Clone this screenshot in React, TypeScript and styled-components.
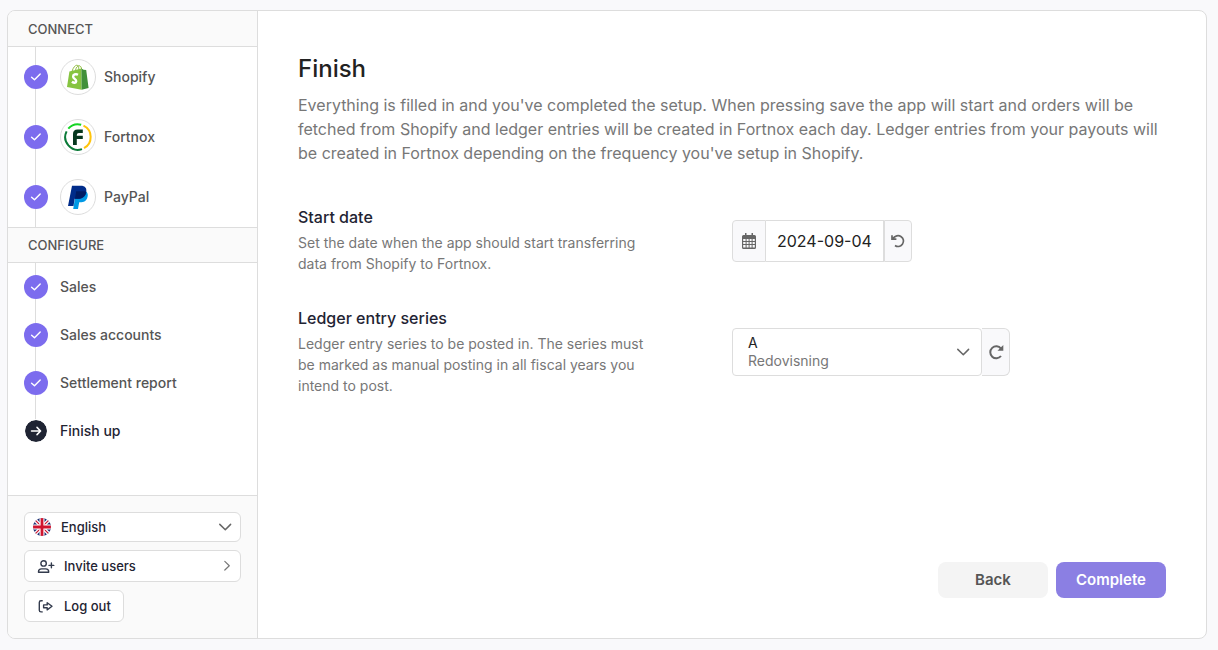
import React, { useState } from "react";
import styled, { createGlobalStyle, css } from "styled-components";

const GlobalStyle = createGlobalStyle`
  *, *::before, *::after { box-sizing: border-box; }
  html, body, #root { height: 100%; }
  body {
    margin: 0;
    background: #f9f9fb;
    font-family: Inter, "Liberation Sans", sans-serif;
    font-size: 14px;
    line-height: 20px;
    color: #1f2433;
  }
  button, input, select { font: inherit; color: inherit; margin: 0; }
`;

const line = "#dddddd";

const Page = styled.div`
  min-height: 100%;
  display: flex;
  padding: 10px 11px 11px 7px;
`;

const Card = styled.div`
  flex: 1;
  display: flex;
  background: #fff;
  border: 1px solid ${line};
  border-radius: 8px;
  overflow: hidden;
`;

const Sidebar = styled.aside`
  flex: none;
  width: 250px;
  display: flex;
  flex-direction: column;
  border-right: 1px solid ${line};
`;

const SectionTitle = styled.h2<{ $divided?: boolean }>`
  margin: 0;
  height: 36px;
  padding: 0 20px;
  display: flex;
  align-items: center;
  background: #fafafa;
  border-bottom: 1px solid ${line};
  ${(p) => p.$divided && css`border-top: 1px solid ${line};`}
  font-size: 13px;
  font-weight: 500;
  color: #555;
`;

const Steps = styled.ol`
  list-style: none;
  margin: 0;
  padding: 0;
`;

const Step = styled.li<{ $tall?: boolean; $last?: boolean }>`
  height: ${(p) => (p.$tall ? 60 : 48)}px;
  padding-left: 16px;
  display: flex;
  align-items: center;
  background: linear-gradient(${line}, ${line}) 27px 0 / 1px ${(p) => (p.$last ? "50%" : "100%")} no-repeat;
`;

const StepLink = styled.a<{ $current?: boolean }>`
  display: flex;
  align-items: center;
  color: ${(p) => (p.$current ? "#1f2433" : "#555")};
  font-weight: 500;
  text-decoration: none;
`;

const StepMark = styled.span<{ $current?: boolean }>`
  width: 24px;
  height: 24px;
  margin-right: 12px;
  border-radius: 50%;
  border: ${(p) => (p.$current ? "1px solid #fff" : "0")};
  background: ${(p) => (p.$current ? "#1f2433" : "#7c6cee")};
  background-clip: padding-box;
  display: grid;
  place-items: center;
`;

const Logo = styled.span`
  width: 36px;
  height: 36px;
  margin-right: 8px;
  border: 1px solid ${line};
  border-radius: 50%;
  display: grid;
  place-items: center;
`;

const SideFooter = styled.div`
  margin-top: auto;
  padding: 16px;
  display: flex;
  flex-direction: column;
  align-items: flex-start;
  gap: 8px;
  background: #fafafa;
  border-top: 1px solid ${line};
  font-size: 13px;
  font-weight: 500;
`;

const Language = styled.div`
  width: 100%;
  height: 30px;
  display: grid;
  grid-template: 28px / 18px 1fr 14px;
  align-items: center;
  padding: 0 8px;
  background: #fff;
  border: 1px solid ${line};
  border-radius: 6px;
  svg { grid-area: 1 / 1; z-index: 1; pointer-events: none; }
  svg:last-child { grid-area: 1 / 3; }
`;

const LanguageSelect = styled.select`
  grid-area: 1 / 1 / 2 / 4;
  width: 100%;
  padding: 0 20px 0 28px;
  appearance: none;
  border: 0;
  background: transparent;
`;

const SideButton = styled.button<{ $wide?: boolean }>`
  width: ${(p) => (p.$wide ? "100%" : "auto")};
  height: 32px;
  display: flex;
  align-items: center;
  gap: 9px;
  padding: 0 ${(p) => (p.$wide ? 9 : 12)}px 0 12px;
  background: #fff;
  border: 1px solid ${line};
  border-radius: 6px;
  svg:nth-of-type(2) { margin-left: auto; }
`;

const Main = styled.main`
  flex: 1;
  min-width: 0;
  display: flex;
  flex-direction: column;
  padding: 40px;
`;

const Title = styled.h1`
  margin: 0 0 6px;
  font-size: 24px;
  line-height: 36px;
  font-weight: 500;
  color: #222;
`;

const Intro = styled.p`
  margin: 0 0 40px;
  font-size: 16px;
  line-height: 24px;
  color: #777;
`;

const Fields = styled.div`
  display: flex;
  flex-direction: column;
  gap: 30px;
`;

const Field = styled.div`
  display: grid;
  grid-template-columns: 1fr 1fr;
  align-items: center;
`;

const FieldText = styled.div`
  max-width: 360px;
  padding-bottom: 2px;
`;

const FieldLabel = styled.label`
  display: block;
  margin-bottom: 3px;
  font-size: 16px;
  line-height: 24px;
  font-weight: 500;
`;

const FieldHint = styled.p`
  margin: 0;
  line-height: 21px;
  color: #777;
`;

const InputGroup = styled.div<{ $tall?: boolean }>`
  display: flex;
  height: ${(p) => (p.$tall ? 48 : 42)}px;
`;

const addon = css`
  display: grid;
  place-items: center;
  padding: 0;
  border: 1px solid ${line};
  background: #f9f9fb;
  color: #666;
`;

const Prefix = styled.span`
  ${addon}
  width: 34px;
  border-radius: 4px 0 0 4px;
`;

const AddonButton = styled.button<{ $joined?: boolean }>`
  ${addon}
  width: 28px;
  border-radius: 0 ${(p) => (p.$joined ? "6px 6px" : "4px 4px")} 0;
  ${(p) => p.$joined && css`border-left: 0;`}
`;

const DateInput = styled.input`
  width: 118px;
  padding: 0 11px;
  border: 1px solid ${line};
  border-left: 0;
  background: #fff;
  font-size: 16px;
  color: #222;
`;

const Series = styled.div`
  position: relative;
  width: 250px;
  padding: 0 11px 0 15px;
  display: flex;
  align-items: center;
  justify-content: space-between;
  border: 1px solid ${line};
  border-radius: 4px;
  background: #fff;
`;

const SeriesValue = styled.span`
  display: grid;
  line-height: 18px;
  color: #222;
  small { font-size: 14px; color: #777; }
`;

const SeriesSelect = styled.select`
  position: absolute;
  inset: 0;
  width: 100%;
  opacity: 0;
`;

const Actions = styled.div`
  margin-top: auto;
  padding-top: 40px;
  display: flex;
  justify-content: flex-end;
  gap: 8px;
`;

const ActionButton = styled.button<{ $primary?: boolean }>`
  width: 110px;
  height: 36px;
  padding: 0;
  border: 0;
  border-radius: 8px;
  font-size: 15px;
  font-weight: 600;
  background: ${(p) => (p.$primary ? "#8b7fe3" : "#f4f4f4")};
  color: ${(p) => (p.$primary ? "#fff" : "#555")};
`;

const Check = () => (
  <svg width="12" height="12" viewBox="0 0 12 12" fill="none" stroke="#fff" strokeWidth="1.4" strokeLinecap="round" strokeLinejoin="round">
    <path d="M1.600 6.200 4.500 8.800 10.200 3" />
  </svg>
);

const Arrow = () => (
  <svg width="12" height="12" viewBox="0 0 12 12" fill="none" stroke="#fff" strokeWidth="1.5" strokeLinecap="round" strokeLinejoin="round">
    <path d="M1.5 6h9M7 2.4 10.6 6 7 9.6" />
  </svg>
);

const ChevronDown = () => (
  <svg width="14" height="12" viewBox="0 0 14 12" fill="none" stroke="#666" strokeWidth="1.5" strokeLinecap="round" strokeLinejoin="round">
    <path d="M1.800 3.400 7.300 8.800l5.300-5.400" />
  </svg>
);

const ChevronRight = () => (
  <svg width="8" height="12" viewBox="0 0 8 12" fill="none" stroke="#777" strokeWidth="1.2" strokeLinecap="round" strokeLinejoin="round">
    <path d="m1.800 1.400 4.500 4.300-4.500 4.300" />
  </svg>
);

const ShopifyLogo = () => (
  <svg width="22" height="26" viewBox="0 0 22 26">
    <path d="M5.200 7C6 3.800 8 1.400 9.800 1.200c1.400-.1 2 1.700 2.100 4.600M8.500 6.300c.5-2.700 2-4.500 3.500-4.600 1.600 0 2.400 1.700 2.700 3.600" fill="none" stroke="#95bf47" strokeWidth="1" />
    <path d="M2.400 7.400 14.400 4.400l.2 21.400L0 23z" fill="#86c440" />
    <path d="m14.400 4.400 2.200 1.300 2.600.4L21.600 24 14.600 25.800z" fill="#41913a" />
    <path d="M11 10.700c-2.400-1.200-5-.1-4.900 2 .1 2.100 3.200 2.400 3.100 4.500-.1 1.900-2.300 1.900-4.300.5" fill="none" stroke="#fff" strokeWidth="2.400" />
  </svg>
);

const FortnoxLogo = () => (
  <svg width="28" height="28" viewBox="0 0 28 28" fill="none">
    <path d="M4.300 5.600A12.700 12.700 0 0 1 17.200 1.700" stroke="#14d424" strokeWidth="2" />
    <path d="M19.500 2.600A12.700 12.700 0 0 1 20 25.200" stroke="#ffc40c" strokeWidth="2" />
    <path d="M18 26.100A12.700 12.700 0 0 1 2.600 8.400" stroke="#0b7a38" strokeWidth="2" />
    <path d="M9 22V11q0-4.500 4.500-4.500h5.300V10h-4q-2 0-2 2v.8h6V16h-6v6z" fill="#06371f" />
  </svg>
);

const PayPalLogo = () => (
  <svg width="20" height="24" viewBox="0 0 20 24">
    <path d="M17.800 6.200c2 1.300 2.300 3.400 1.700 5.700-1 4-3.700 5.300-7.300 5.300h-1L10 24H5.200L8 7z" fill="#0099e5" />
    <path d="M4 .8h8.500c5 0 6.600 2.700 5.600 6.900-1 4.300-4 6-8.500 6H6.700L5.500 21H0z" fill="#002c8a" />
    <path d="M8.200 6.200h8.900l1.100 1c-1 4.600-4.100 6.500-8.600 6.500H7z" fill="#001c64" />
  </svg>
);

const UkFlag = () => (
  <svg width="18" height="18" viewBox="0 0 18 18">
    <clipPath id="flag-round"><circle cx="9" cy="9" r="9" /></clipPath>
    <g clipPath="url(#flag-round)">
      <path d="M0 0h18v18H0z" fill="#1c2f73" />
      <path d="m0 0 18 18M18 0 0 18" stroke="#fff" strokeWidth="3.600" />
      <path d="m0 0 18 18M18 0 0 18" stroke="#d0142f" strokeWidth="1.200" />
      <path d="M9 0v18M0 9h18" stroke="#fff" strokeWidth="5" />
      <path d="M9 0v18M0 9h18" stroke="#d0142f" strokeWidth="2.800" />
    </g>
  </svg>
);

const InviteIcon = () => (
  <svg width="18" height="16" viewBox="0 0 18 16" fill="none" stroke="#333b4d" strokeWidth="1.400" strokeLinecap="round" strokeLinejoin="round">
    <circle cx="6.600" cy="5.400" r="2.700" />
    <path d="M1.500 14.300v-.6c0-1.700 1.400-2.800 3-2.800h4.200c1.600 0 3 1.100 3 2.800v.6zM14.400 5v4.800M12 7.400h4.800" />
  </svg>
);

const LogoutIcon = () => (
  <svg width="18" height="16" viewBox="0 0 18 16" fill="none" stroke="#333b4d" strokeWidth="1.400" strokeLinecap="round" strokeLinejoin="round">
    <path d="M5.200 2.700H4Q2.300 2.700 2.300 4.400v7.800q0 1.700 1.700 1.700h1.200M6.600 6.900v2.800h3.600v2.200l4.800-3.600-4.800-3.600v2.200z" />
  </svg>
);

const CalendarIcon = () => (
  <svg width="14" height="16" viewBox="0 0 14 16">
    <path fill="currentColor" fillRule="evenodd" d="M3 0h1.500v2h5V0H11v2h1.500Q14 2 14 3.500v11q0 1.500-1.500 1.500h-11Q0 16 0 14.500v-11Q0 2 1.500 2H3zM1.200 6v2h2.400V6zm3.400 0v2h2V6zm3 0v2h2V6zm3 0v2h2.200V6zM1.200 9v2h2.400V9zm3.400 0v2h2V9zm3 0v2h2V9zm3 0v2h2.200V9zM1.200 12v2.600h2.400V12zm3.400 0v2.600h2V12zm3 0v2.600h2V12zm3 0v2.600h2.200V12z" />
  </svg>
);

const UndoIcon = () => (
  <svg width="14" height="14" viewBox="0 0 14 14" fill="none" stroke="currentColor" strokeWidth="1.700">
    <path d="M1 1.200v4h4.400M1.500 5C3.800 1.600 7.500.9 10.200 2.700c2.500 1.700 3 5.200 1.200 7.600-1.800 2.400-5 2.900-7.400 1.200" />
  </svg>
);

const RedoIcon = () => (
  <svg width="16" height="16" viewBox="0 0 16 16" fill="none">
    <path d="M13 4.600A6 6 0 1 0 13 12" stroke="currentColor" strokeWidth="2" />
    <path d="M15.300 1v5.800H9.500z" fill="currentColor" />
  </svg>
);

const connectSteps = [
  { name: "Shopify", logo: <ShopifyLogo /> },
  { name: "Fortnox", logo: <FortnoxLogo /> },
  { name: "PayPal", logo: <PayPalLogo /> },
];

const configureSteps = ["Sales", "Sales accounts", "Settlement report", "Finish up"];

const seriesOptions = [{ code: "A", name: "Redovisning" }];

const defaultDate = "2024-09-04";

export default function App() {
  const [date, setDate] = useState(defaultDate);
  const [series, setSeries] = useState("A");
  const selected = seriesOptions.find((s) => s.code === series)!;

  return (
    <>
      <GlobalStyle />
      <Page>
        <Card>
          <Sidebar>
            <SectionTitle>CONNECT</SectionTitle>
            <Steps>
              {connectSteps.map((s) => (
                <Step key={s.name} $tall>
                  <StepLink href="#">
                    <StepMark><Check /></StepMark>
                    <Logo>{s.logo}</Logo>
                    {s.name}
                  </StepLink>
                </Step>
              ))}
            </Steps>
            <SectionTitle $divided>CONFIGURE</SectionTitle>
            <Steps>
              {configureSteps.map((name, i) => {
                const current = i === configureSteps.length - 1;
                return (
                  <Step key={name} $last={current}>
                    <StepLink href="#" $current={current} aria-current={current ? "step" : undefined}>
                      <StepMark $current={current}>{current ? <Arrow /> : <Check />}</StepMark>
                      {name}
                    </StepLink>
                  </Step>
                );
              })}
            </Steps>
            <SideFooter>
              <Language>
                <UkFlag />
                <LanguageSelect aria-label="Language" defaultValue="English">
                  <option>English</option>
                </LanguageSelect>
                <ChevronDown />
              </Language>
              <SideButton type="button" $wide>
                <InviteIcon />
                Invite users
                <ChevronRight />
              </SideButton>
              <SideButton type="button">
                <LogoutIcon />
                Log out
              </SideButton>
            </SideFooter>
          </Sidebar>
          <Main>
            <Title>Finish</Title>
            <Intro>
              Everything is filled in and you've completed the setup. When pressing save the app will start and orders
              will be fetched from Shopify and ledger entries will be created in Fortnox each day. Ledger entries from
              your payouts will be created in Fortnox depending on the frequency you've setup in Shopify.
            </Intro>
            <Fields>
              <Field>
                <FieldText>
                  <FieldLabel htmlFor="start-date">Start date</FieldLabel>
                  <FieldHint>Set the date when the app should start transferring data from Shopify to Fortnox.</FieldHint>
                </FieldText>
                <InputGroup>
                  <Prefix><CalendarIcon /></Prefix>
                  <DateInput id="start-date" value={date} onChange={(e) => setDate(e.target.value)} />
                  <AddonButton type="button" aria-label="Reset date" onClick={() => setDate(defaultDate)}>
                    <UndoIcon />
                  </AddonButton>
                </InputGroup>
              </Field>
              <Field>
                <FieldText>
                  <FieldLabel htmlFor="series">Ledger entry series</FieldLabel>
                  <FieldHint>
                    Ledger entry series to be posted in. The series must be marked as manual posting in all fiscal years
                    you intend to post.
                  </FieldHint>
                </FieldText>
                <InputGroup $tall>
                  <Series>
                    <SeriesValue>
                      {selected.code}
                      <small>{selected.name}</small>
                    </SeriesValue>
                    <ChevronDown />
                    <SeriesSelect id="series" value={series} onChange={(e) => setSeries(e.target.value)}>
                      {seriesOptions.map((s) => (
                        <option key={s.code} value={s.code}>{s.code}</option>
                      ))}
                    </SeriesSelect>
                  </Series>
                  <AddonButton type="button" $joined aria-label="Reload series">
                    <RedoIcon />
                  </AddonButton>
                </InputGroup>
              </Field>
            </Fields>
            <Actions>
              <ActionButton type="button">Back</ActionButton>
              <ActionButton type="button" $primary>Complete</ActionButton>
            </Actions>
          </Main>
        </Card>
      </Page>
    </>
  );
}
